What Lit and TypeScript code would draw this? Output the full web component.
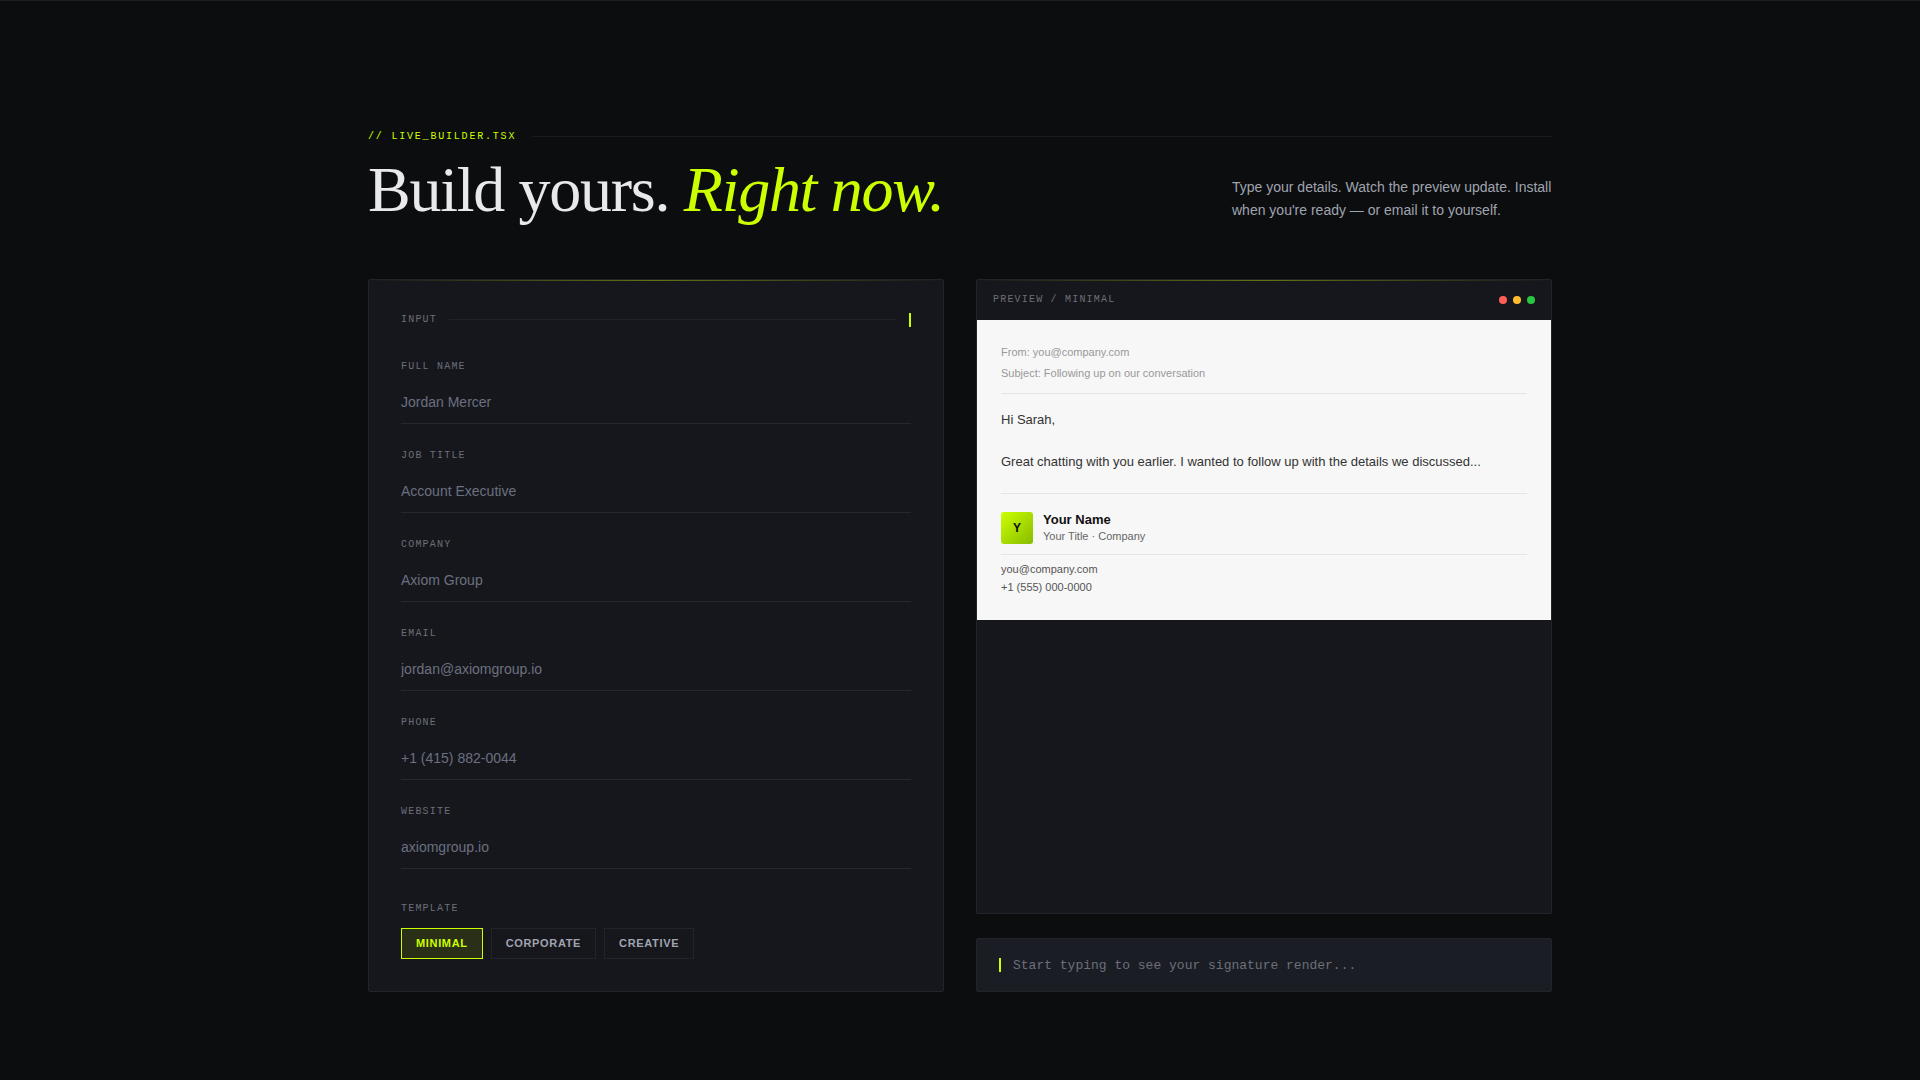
import { LitElement, html, css } from "lit";
import { customElement, state } from "lit/decorators.js";
import { classMap } from "lit/directives/class-map.js";

interface Field {
  key: string;
  label: string;
  type: string;
  placeholder: string;
}

const FIELDS: Field[] = [
  { key: "name", label: "Full name", type: "text", placeholder: "Jordan Mercer" },
  { key: "title", label: "Job title", type: "text", placeholder: "Account Executive" },
  { key: "company", label: "Company", type: "text", placeholder: "Axiom Group" },
  { key: "email", label: "Email", type: "email", placeholder: "jordan@axiomgroup.io" },
  { key: "phone", label: "Phone", type: "tel", placeholder: "+1 (415) 882-0044" },
  { key: "website", label: "Website", type: "text", placeholder: "axiomgroup.io" },
];

const TEMPLATES = ["Minimal", "Corporate", "Creative"];

@customElement("app-root")
export class AppRoot extends LitElement {
  @state() private values: Record<string, string> = {};
  @state() private template = "Minimal";

  static styles = css`
    :host {
      display: block;
      min-height: 100vh;
      box-sizing: border-box;
      background: #0b0d0e;
      border-top: 1px solid #1b1d20;
      color: #e8e8ed;
      font-family: "Liberation Sans", Arial, sans-serif;
    }
    *,
    *::before {
      box-sizing: border-box;
    }
    .section {
      max-width: 1280px;
      margin: 0 auto;
      padding: 128px 48px 88px;
    }
    .mono {
      font-family: "Liberation Mono", "Courier New", monospace;
      font-size: 10px;
      line-height: 15px;
      letter-spacing: 0.12em;
      text-transform: uppercase;
      color: #6b6f7a;
    }
    .eyebrow {
      display: flex;
      align-items: center;
      gap: 16px;
      margin-bottom: 14px;
    }
    .eyebrow .mono {
      letter-spacing: 0.18em;
      color: #ccff00;
    }
    .rule {
      flex: 1;
      height: 1px;
      background: #191b1e;
    }
    .intro {
      display: flex;
      flex-wrap: wrap;
      align-items: flex-end;
      justify-content: space-between;
      gap: 32px;
      margin-bottom: 57px;
    }
    h2 {
      margin: 0;
      font-family: "Liberation Serif", "Times New Roman", serif;
      font-size: 64px;
      line-height: 64px;
      font-weight: 400;
      letter-spacing: -0.02em;
    }
    h2 em {
      color: #ccff00;
    }
    .lede {
      margin: 0;
      max-width: 320px;
      font-size: 14px;
      line-height: 23px;
      color: #a0a4b0;
    }
    .columns {
      display: grid;
      grid-template-columns: repeat(auto-fit, minmax(min(100%, 440px), 1fr));
      gap: 32px;
    }
    .card {
      position: relative;
      border: 1px solid #222429;
      border-radius: 2px;
      background: #16171c;
    }
    .card::before {
      content: "";
      position: absolute;
      inset: 0 0 auto;
      height: 1px;
      background: linear-gradient(90deg, transparent, #ccff00, transparent);
      opacity: 0.4;
    }
    .form {
      padding: 32px;
    }
    .form-head {
      display: flex;
      align-items: center;
      gap: 12px;
      margin-bottom: 32px;
    }
    .form-head .rule {
      background: #212328;
    }
    .caret {
      width: 2px;
      height: 14px;
      background: #ccff00;
    }
    .field {
      display: flex;
      flex-direction: column;
      gap: 8px;
      margin-bottom: 24px;
    }
    .field input {
      width: 100%;
      height: 42px;
      padding: 0 0 2px;
      border: 0;
      border-bottom: 1px solid #25272d;
      border-radius: 0;
      outline: 0;
      background: transparent;
      font: 14px/17px "Liberation Sans", Arial, sans-serif;
      color: #e8e8ed;
    }
    .field input::placeholder {
      color: #6b7080;
      opacity: 1;
    }
    .field input:focus {
      border-bottom-color: #ccff00;
    }
    .templates {
      min-width: 0;
      margin: 32px 0 0;
      padding: 12px 0 0;
      border: 0;
    }
    .templates legend {
      padding: 0;
    }
    .options {
      display: flex;
      flex-wrap: wrap;
      gap: 8px;
    }
    .option {
      height: 31px;
      padding: 0 14px;
      border: 1px solid #222429;
      border-radius: 0;
      background: transparent;
      font: 700 11px/13px "Liberation Sans", Arial, sans-serif;
      letter-spacing: 0.06em;
      text-transform: uppercase;
      color: #a0a4b0;
      cursor: pointer;
    }
    .option.selected {
      border-color: #ccff00;
      background: #2a3018;
      color: #ccff00;
    }
    .output {
      display: flex;
      flex-direction: column;
      gap: 24px;
    }
    .preview {
      flex: 1;
    }
    .bar {
      display: flex;
      align-items: center;
      justify-content: space-between;
      height: 40px;
      padding: 0 16px;
    }
    .bar .mono {
      line-height: 16px;
    }
    .dots {
      display: flex;
      gap: 6px;
    }
    .dot {
      width: 8px;
      height: 8px;
      border-radius: 50%;
    }
    .red {
      background: #ff5f57;
    }
    .amber {
      background: #febc2e;
    }
    .green {
      background: #28c840;
    }
    .mail {
      padding: 24px;
      background: #f7f7f7;
      font-size: 11px;
      line-height: 18px;
      color: #555;
    }
    .mail p {
      margin: 0;
    }
    .meta {
      display: grid;
      gap: 4px;
      padding-bottom: 11px;
      margin-bottom: 15px;
      border-bottom: 1px solid #e5e5e5;
      line-height: 17px;
      color: #999;
    }
    .message {
      padding-bottom: 21px;
      margin-bottom: 18px;
      border-bottom: 1px solid #e5e5e5;
      font-size: 13px;
      line-height: 21px;
      color: #333;
    }
    .message p + p {
      margin-top: 21px;
    }
    .sender {
      display: flex;
      align-items: center;
      gap: 10px;
      padding-bottom: 10px;
      margin-bottom: 5px;
      border-bottom: 1px solid #e5e5e5;
    }
    .avatar {
      display: grid;
      place-items: center;
      width: 32px;
      height: 32px;
      border-radius: 3px;
      background: linear-gradient(135deg, #ccff00, #88bb00);
      font-size: 12px;
      font-weight: 700;
      color: #0b0d0e;
    }
    .who {
      display: grid;
      gap: 2px;
      line-height: 15px;
      color: #666;
    }
    .who strong {
      font-size: 13px;
      color: #111;
    }
    .status {
      display: flex;
      align-items: center;
      gap: 12px;
      min-height: 54px;
      padding: 0 22px;
      border: 1px solid #222429;
      border-radius: 2px;
      background: #1b1d25;
      font-family: "Liberation Mono", "Courier New", monospace;
      font-size: 13px;
      line-height: 15px;
      color: #6b6f7a;
    }
  `;

  private setValue(key: string, e: Event) {
    this.values = { ...this.values, [key]: (e.target as HTMLInputElement).value };
  }

  private value(key: string, fallback: string) {
    return this.values[key] || fallback;
  }

  render() {
    const name = this.value("name", "Your Name");
    const email = this.value("email", "you@company.com");
    const started = Object.values(this.values).some(Boolean);
    return html`
      <section class="section">
        <div class="eyebrow">
          <span class="mono">// live_builder.tsx</span>
          <span class="rule"></span>
        </div>
        <header class="intro">
          <h2>Build yours. <em>Right now.</em></h2>
          <p class="lede">
            Type your details. Watch the preview update. Install when you're ready — or email it to
            yourself.
          </p>
        </header>
        <div class="columns">
          <form class="card form" @submit=${(e: Event) => e.preventDefault()}>
            <div class="form-head">
              <span class="mono">Input</span>
              <span class="rule"></span>
              <span class="caret"></span>
            </div>
            ${FIELDS.map(
              (f) => html`
                <div class="field">
                  <label class="mono" for=${f.key}>${f.label}</label>
                  <input
                    id=${f.key}
                    type=${f.type}
                    placeholder=${f.placeholder}
                    @input=${(e: Event) => this.setValue(f.key, e)}
                  />
                </div>
              `
            )}
            <fieldset class="templates">
              <legend class="mono">Template</legend>
              <div class="options">
                ${TEMPLATES.map(
                  (t) => html`
                    <button
                      type="button"
                      class=${classMap({ option: true, selected: t === this.template })}
                      aria-pressed=${t === this.template ? "true" : "false"}
                      @click=${() => (this.template = t)}
                    >
                      ${t}
                    </button>
                  `
                )}
              </div>
            </fieldset>
          </form>
          <div class="output">
            <article class="card preview">
              <div class="bar">
                <span class="mono">Preview / ${this.template}</span>
                <span class="dots">
                  <span class="dot red"></span>
                  <span class="dot amber"></span>
                  <span class="dot green"></span>
                </span>
              </div>
              <div class="mail">
                <div class="meta">
                  <p>From: ${email}</p>
                  <p>Subject: Following up on our conversation</p>
                </div>
                <div class="message">
                  <p>Hi Sarah,</p>
                  <p>
                    Great chatting with you earlier. I wanted to follow up with the details we
                    discussed...
                  </p>
                </div>
                <div class="sender">
                  <span class="avatar">${name.charAt(0).toUpperCase()}</span>
                  <div class="who">
                    <strong>${name}</strong>
                    <span>${this.value("title", "Your Title")} · ${this.value("company", "Company")}</span>
                  </div>
                </div>
                <p>${email}</p>
                <p>${this.value("phone", "+1 (555) 000-0000")}</p>
                ${this.values.website ? html`<p>${this.values.website}</p>` : ""}
              </div>
            </article>
            <div class="status" role="status">
              <span class="caret"></span>
              <span>${started ? "Rendering your signature..." : "Start typing to see your signature render..."}</span>
            </div>
          </div>
        </div>
      </section>
    `;
  }
}
